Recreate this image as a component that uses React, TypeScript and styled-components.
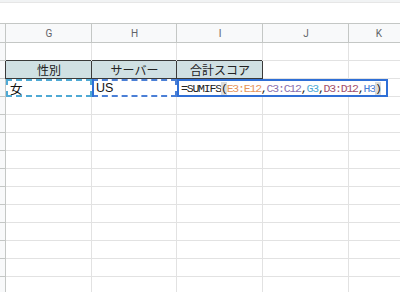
import React from 'react';
import styled, { createGlobalStyle } from 'styled-components';

const COLS = ['G', 'H', 'I', 'J', 'K'];
const WIDTHS = [86, 85, 86, 86, 60];
const GRID = '#e2e2e2';
const DARK = '#3a3a3a';

const Global = createGlobalStyle`
	html, body {
		margin: 0;
		padding: 0;
		background: #fff;
		overflow: hidden;
	}
	body {
		font-family: 'Liberation Sans', 'Noto Sans CJK JP', sans-serif;
	}
`;

const Page = styled.div`
	width: 400px;
	height: 292px;
	overflow: hidden;
	display: flex;
	flex-direction: column;
`;

const TopStrip = styled.div`
	height: 2px;
	background: #f1f3f4;
	border-bottom: 1px solid #e6e6e6;
	flex-shrink: 0;
`;

const Spacer = styled.div`
	height: 20px;
	flex-shrink: 0;
`;

const Sheet = styled.div`
	display: grid;
	grid-template-columns: 6px ${WIDTHS.map((w) => `${w}px`).join(' ')};
	grid-template-rows: 20px;
	grid-auto-rows: 18px;
`;

const Corner = styled.div`
	background: #f8f9fa;
	box-shadow: inset -1px -1px 0 #c4c7c5, inset 0 1px 0 #c4c7c5;
`;

const ColHead = styled.div`
	background: #f8f9fa;
	box-shadow: inset -1px -1px 0 #c4c7c5, inset 0 1px 0 #c4c7c5;
	color: #5f6368;
	font-family: Roboto, 'Liberation Sans', sans-serif;
	font-size: 10px;
	display: flex;
	align-items: center;
	justify-content: center;
`;

const RowHead = styled.div<{ $dark?: boolean }>`
	background: #f8f9fa;
	box-shadow: inset -1px 0 0 ${(p) => (p.$dark ? DARK : '#c4c7c5')},
		inset 0 -1px 0 #c4c7c5;
`;

const Cell = styled.div<{ $below?: boolean }>`
	box-shadow: inset -1px -1px 0 ${GRID};
	${(p) => p.$below && `box-shadow: inset -1px 0 0 ${GRID}, inset 0 -1px 0 ${DARK};`}
`;

const TableHead = styled.div`
	background: #d0e0e3;
	box-shadow: inset -1px -1px 0 ${DARK};
	color: #222;
	font-family: 'Noto Sans CJK JP', sans-serif;
	font-size: 12px;
	display: flex;
	align-items: center;
	justify-content: center;
	line-height: 1;
`;

const RefCell = styled.div<{ $color: string }>`
	box-sizing: border-box;
	border: 2px dashed ${(p) => p.$color};
	height: 18px;
	padding-left: 2px;
	color: #111;
	font-size: 12.5px;
	display: flex;
	align-items: center;
	position: relative;
	z-index: 1;
	background: #fff;
`;

const RefHandle = styled.span`
	position: absolute;
	left: -2px;
	top: -2px;
	bottom: -2px;
	width: 2px;
	background: #2f6fd6;
`;

const EditHost = styled.div`
	position: relative;
`;

const Editor = styled.div`
	position: absolute;
	left: 0;
	top: 0;
	width: 211px;
	height: 18px;
	box-sizing: border-box;
	border: 2px solid #2f6fd6;
	background: #fff;
	z-index: 2;
	display: flex;
	align-items: center;
	padding-left: 2px;
	font-family: 'Liberation Mono', monospace;
	font-size: 11.5px;
	letter-spacing: -1.2px;
	color: #222;
	white-space: nowrap;
`;

const Tok = styled.span<{ $c?: string; $match?: boolean }>`
	color: ${(p) => p.$c || '#222'};
	${(p) => p.$match && 'background: #dcdcdc;'}
`;

const formula: [string, string?, boolean?][] = [
	['=SUMIFS'],
	['(', undefined, true],
	['E3:E12', '#e6955a'],
	[','],
	['C3:C12', '#8a6fae'],
	[','],
	['G3', '#4fa9d4'],
	[','],
	['D3:D12', '#a2506c'],
	[','],
	['H3', '#4a7fd6'],
	[')', undefined, true],
];

const EMPTY_ROWS = 12;

const App = () => {
	return (
		<Page>
			<Global />
			<TopStrip />
			<Spacer />
			<Sheet>
				<Corner />
				{COLS.map((c) => (
					<ColHead key={c}>{c}</ColHead>
				))}

				{/* row above the table */}
				<RowHead />
				{COLS.map((c, i) => (
					<Cell key={c} $below={i < 3} />
				))}

				{/* table header */}
				<RowHead $dark />
				<TableHead>性別</TableHead>
				<TableHead>サーバー</TableHead>
				<TableHead>合計スコア</TableHead>
				<Cell />
				<Cell />

				{/* data row */}
				<RowHead />
				<RefCell $color="#4fa9d4">女</RefCell>
				<RefCell $color="#4a7fd6">
					<RefHandle />
					US
				</RefCell>
				<EditHost>
					<Editor>
						{formula.map(([t, c, m], i) => (
							<Tok key={i} $c={c} $match={m}>
								{t}
							</Tok>
						))}
					</Editor>
				</EditHost>
				<Cell />
				<Cell />

				{Array.from({ length: EMPTY_ROWS }).map((_, r) => (
					<React.Fragment key={r}>
						<RowHead />
						{COLS.map((c) => (
							<Cell key={c} />
						))}
					</React.Fragment>
				))}
			</Sheet>
		</Page>
	);
};

export default App;
